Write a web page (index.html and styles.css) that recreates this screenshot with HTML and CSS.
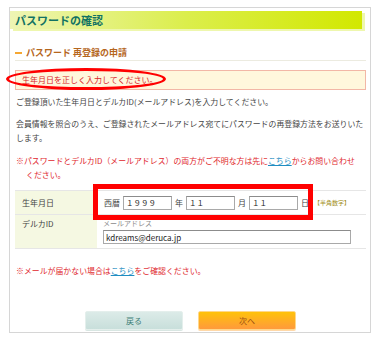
FILE: index.html
```html
<!DOCTYPE html>
<html lang="ja">
<head>
    <meta charset="UTF-8">
    <meta name="viewport" content="width=device-width, initial-scale=1.0">
    <title>パスワードの確認</title>
    <link rel="stylesheet" href="styles.css">
</head>
<body>
    <div class="panel">
        <h1 class="title">パスワードの確認</h1>
        <div class="content">
            <h2 class="sub"><span class="dash"></span>パスワード 再登録の申請</h2>
            <div class="error">生年月日を正しく入力してください。</div>
            <p class="text first">ご登録頂いた生年月日とデルカID(メールアドレス)を入力してください。</p>
            <p class="text">会員情報を照合のうえ、ご登録されたメールアドレス宛てにパスワードの再登録方法をお送りいた<br>します。</p>
            <p class="text red hang">※パスワードとデルカID（メールアドレス）の両方がご不明な方は先に<a href="#">こちら</a>からお問い合わせ<br>ください。</p>

            <div class="form-table">
                <div class="form-row row-birth">
                    <div class="label">生年月日</div>
                    <div class="value date-line">
                        <span>西暦</span>
                        <input type="text" class="num" value="１９９９">
                        <span>年</span>
                        <input type="text" class="num" value="１１">
                        <span>月</span>
                        <input type="text" class="num" value="１１">
                        <span>日</span>
                        <span class="hint">【半角数字】</span>
                    </div>
                </div>
                <div class="form-row row-id">
                    <div class="label">デルカID</div>
                    <div class="value">
                        <div class="small-label">メールアドレス</div>
                        <input type="text" class="mail" value="kdreams@deruca.jp">
                    </div>
                </div>
            </div>

            <p class="text red note">※メールが届かない場合は<a href="#">こちら</a>をご確認ください。</p>

            <div class="buttons">
                <button type="button" class="btn back">戻る</button>
                <button type="button" class="btn next">次へ</button>
            </div>
        </div>

        <!-- red annotation marks -->
        <div class="mark-ellipse"></div>
        <div class="mark-rect"></div>
    </div>
</body>
</html>
```

FILE: styles.css
```css
body {
    margin: 0;
    padding: 0;
    background-color: #ffffff;
    font-family: "Noto Sans CJK JP", "Noto Sans", sans-serif;
    color: #444;
}
.panel {
    position: relative;
    box-sizing: border-box;
    width: 362px;
    height: 326px;
    margin: 7px 0 0 9px;
    border: 1px solid #d6d6d6;
    padding-top: 3px;
}
.title {
    height: 18px;
    margin: 0 8px 0 0;
    padding-left: 5px;
    font-size: 11px;
    font-weight: bold;
    line-height: 18px;
    color: #127263;
    background: linear-gradient(to right, #eef5b4, #dbee4c 50%, #d2e800);
    box-shadow: 3px 2px 0 #eef7ae;
}
.content {
    padding: 0 4px 0 5px;
}
.sub {
    display: flex;
    align-items: center;
    gap: 4px;
    margin: 0;
    padding-top: 16px;
    font-size: 9px;
    font-weight: bold;
    line-height: 15px;
    color: #b5661d;
    border-bottom: 1px solid #ecebe0;
}
.dash {
    width: 7px;
    height: 2px;
    background-color: #f5a733;
}
.error {
    margin-top: 9px;
    height: 18px;
    padding-left: 6px;
    font-size: 8px;
    line-height: 18px;
    color: #d8262a;
    background-color: #fff7dc;
    border: 1px solid #f2b7a6;
}
.text {
    margin: 8px 0 0 1px;
    font-size: 7.9px;
    line-height: 14px;
    color: #444;
    white-space: nowrap;
}
.text.first {
    margin-top: 5px;
}
.red {
    color: #e0262c;
}
.hang {
    margin-top: 9px;
    padding-left: 10px;
    text-indent: -10px;
}
.text a {
    color: #1e8dc2;
}
.form-table {
    margin-top: 8px;
    border-top: 1px solid #e6e6e6;
    font-size: 8px;
}
.form-row {
    display: grid;
    grid-template-columns: 82px 1fr;
    border-bottom: 1px solid #e6e6e6;
}
.label {
    padding-left: 7px;
    color: #444;
    background-color: #f5f8e2;
}
.value {
    padding-left: 6px;
}
.row-birth {
    height: 23px;
}
.row-birth .label {
    line-height: 23px;
}
.row-id .label {
    padding-top: 2px;
    line-height: 14px;
}
.row-id .value {
    padding-top: 1px;
    padding-bottom: 4px;
}
.date-line {
    display: flex;
    align-items: center;
    gap: 3px;
    padding-left: 7px;
}
.date-line .hint {
    margin-left: 2px;
    font-size: 6px;
    color: #a38f1e;
}
input {
    display: block;
    box-sizing: border-box;
    height: 14px;
    padding: 0 2px;
    font-family: "Noto Sans CJK JP", sans-serif;
    font-size: 7.5px;
    color: #222;
    border: 1px solid #a9a9a9;
    border-top-color: #8c8c8c;
    background: #fff;
}
.num {
    width: 49px;
}
.small-label {
    font-size: 7px;
    line-height: 14px;
    color: #8a8a8a;
}
.mail {
    width: 248px;
    font-size: 8px;
}
.note {
    margin-top: 15px;
}
.buttons {
    display: flex;
    justify-content: center;
    gap: 15px;
    margin-top: 33px;
}
.btn {
    width: 98px;
    height: 19px;
    padding: 0;
    font-family: "Noto Sans CJK JP", sans-serif;
    font-size: 8px;
    border-radius: 2px;
    cursor: pointer;
}
.btn.back {
    color: #3f7f77;
    background: linear-gradient(#dcebe8, #c8dfdb);
    border: 1px solid #e4efec;
    box-shadow: 0 1px 0 #d8e6e2;
}
.btn.next {
    color: #9a4d12;
    background: linear-gradient(#ffc20a, #ff9a3c);
    border: 1px solid #ffd88a;
    box-shadow: 0 1px 0 #ffd8a8;
}
.mark-ellipse {
    position: absolute;
    left: -4px;
    top: 60px;
    width: 160px;
    height: 22px;
    box-sizing: border-box;
    border: 3px solid #ff0000;
    border-radius: 50%;
}
.mark-rect {
    position: absolute;
    left: 83px;
    top: 176px;
    width: 220px;
    height: 36px;
    box-sizing: border-box;
    border: 5px solid #ff0000;
}
```
